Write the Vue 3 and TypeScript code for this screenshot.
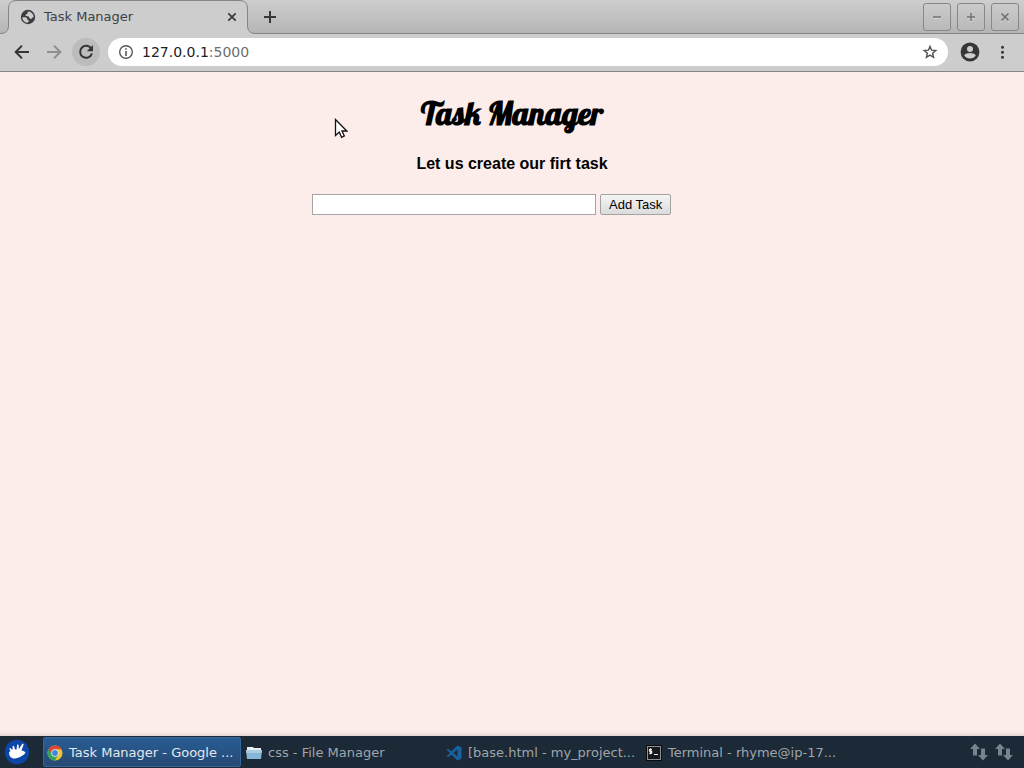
<script setup lang="ts">
import { ref } from 'vue'

const address = ref('127.0.0.1:5000')
const task = ref('')
</script>

<template>
  <div class="desktop">
    <header class="browser">
      <div class="tabstrip">
        <div class="tab">
          <svg class="tab-shape" width="256" height="34" viewBox="0 0 256 34" aria-hidden="true">
            <path d="M0 34V33.5C6 33.5 8.500 31 8.500 25V9C8.500 3 11 .5 17 .5H239C245 .5 247.500 3 247.500 9V25C247.500 31 250 33.500 256 33.500V34Z" fill="#cdcdcd" />
            <path d="M0 33.500C6 33.500 8.500 31 8.500 25V9C8.500 3 11 .5 17 .5H239C245 .5 247.500 3 247.500 9V25C247.500 31 250 33.500 256 33.500" fill="none" stroke="#858585" />
          </svg>
          <svg class="favicon" width="16" height="16" viewBox="0 0 16 16" aria-hidden="true">
            <circle cx="8" cy="8" r="7.200" fill="#3b3d3f" />
            <path d="M8.500 2.400C7.300 2.400 7.200 3.500 7.800 4.200 7.400 5.200 5.400 5 5.500 6.300 5.600 7.600 7.300 7.200 8.400 7.400 9.600 7.700 9 9.200 10 9.800 11.300 10.300 12.300 9.500 12.300 8.500L13.700 8.300C13.700 5.400 11.600 2.800 8.500 2.400ZM2.300 8.300H5.200C6.800 8.400 7.500 9.400 7.200 10.800 8.600 10.700 9.200 11.500 8.600 12.500L7.600 13.800C4.600 13.600 2.300 11.300 2.300 8.300Z" fill="#cdcdcd" />
          </svg>
          <span class="tab-title">Task Manager</span>
          <button class="tab-close" aria-label="Close tab">
            <svg width="10" height="10" viewBox="0 0 10 10"><path d="M1.300 1.300L8.700 8.700M8.700 1.300L1.300 8.700" stroke="#3c3e40" stroke-width="1.800" /></svg>
          </button>
        </div>
        <button class="new-tab" aria-label="New tab">
          <svg width="14" height="14" viewBox="0 0 14 14"><path d="M7 1V13M1 7H13" stroke="#36383a" stroke-width="2" /></svg>
        </button>
        <div class="window-buttons">
          <button aria-label="Minimize"><svg width="12" height="12" viewBox="0 0 12 12"><path d="M2 7H10" stroke="#e2e2e2" /><path d="M2 6H10" stroke="#707070" stroke-width="1.500" /></svg></button>
          <button aria-label="Maximize"><svg width="12" height="12" viewBox="0 0 12 12"><path d="M2 7H10M6 3V11" stroke="#e2e2e2" /><path d="M2 6H10M6 2V10" stroke="#707070" stroke-width="1.500" /></svg></button>
          <button aria-label="Close"><svg width="12" height="12" viewBox="0 0 12 12"><path d="M2 3L10 11M10 3L2 11" stroke="#e2e2e2" /><path d="M2.500 2.500L9.500 9.500M9.500 2.500L2.500 9.500" stroke="#707070" stroke-width="1.700" /></svg></button>
        </div>
      </div>

      <div class="toolbar">
        <button class="tool" aria-label="Back">
          <svg width="16" height="16" viewBox="0 0 16 16"><path d="M15 8H2M8 1.600L1.700 8 8 14.400" fill="none" stroke="#333537" stroke-width="2" /></svg>
        </button>
        <button class="tool" aria-label="Forward">
          <svg width="16" height="16" viewBox="0 0 16 16"><path d="M1 8H14M8 1.600L14.300 8 8 14.400" fill="none" stroke="#8e8e8e" stroke-width="2" /></svg>
        </button>
        <button class="tool hovered" aria-label="Reload">
          <svg width="16" height="16" viewBox="0 0 16 16"><path d="M13.300 4.700A6 6 0 1 0 13.900 9.500" fill="none" stroke="#333537" stroke-width="2" /><path d="M15 1V7.200H8.800Z" fill="#333537" /></svg>
        </button>
        <div class="omnibox">
          <svg width="16" height="16" viewBox="0 0 16 16" aria-hidden="true"><circle cx="8" cy="8" r="6.300" fill="none" stroke="#55585b" stroke-width="1.400" /><path d="M8 7V12M8 4.200V5.800" stroke="#55585b" stroke-width="1.600" /></svg>
          <label class="address">
            <span class="address-text" aria-hidden="true">127.0.0.1<span class="port">:5000</span></span>
            <input v-model="address" type="text" aria-label="Address" />
          </label>
          <button class="star" aria-label="Bookmark this page">
            <svg width="16" height="16" viewBox="0 0 16 16"><path d="M8 2.400L9.600 6.200 13.800 6.500 10.600 9.200 11.600 13.300 8 11.100 4.400 13.300 5.400 9.200 2.200 6.500 6.400 6.200Z" fill="none" stroke="#505356" stroke-width="1.400" /></svg>
          </button>
        </div>
        <button class="profile" aria-label="Profile">
          <svg width="20" height="20" viewBox="0 0 20 20"><circle cx="10" cy="10" r="9.400" fill="#343638" /><circle cx="10" cy="7" r="3" fill="#cdcdcd" /><path d="M4.200 13.500C5 11.700 8 11 10 11S15 11.700 15.800 13.500C14.500 15.500 12.500 16.500 10 16.500S5.500 15.500 4.200 13.500Z" fill="#cdcdcd" /></svg>
        </button>
        <button class="more" aria-label="Menu">
          <svg width="4" height="16" viewBox="0 0 4 16"><g fill="#343638"><circle cx="2.500" cy="3.300" r="1.500" /><circle cx="2.500" cy="8.300" r="1.500" /><circle cx="2.500" cy="13.300" r="1.500" /></g></svg>
        </button>
      </div>
    </header>

    <main class="page">
      <h1>Task Manager</h1>
      <h2>Let us create our firt task</h2>
      <form class="task-form" @submit.prevent>
        <input v-model="task" type="text" aria-label="Task" />
        <button type="submit">Add Task</button>
      </form>
      <svg class="pointer" width="14" height="21" viewBox="0 0 14 21" aria-hidden="true">
        <path d="M1.500 1.500V17.500L5.300 14 7.600 19.300 10.300 18 8 13H12.800Z" fill="#fff" stroke="#151010" stroke-width="1.300" />
      </svg>
    </main>

    <footer class="taskbar">
      <button class="start" aria-label="Applications">
        <svg width="26" height="26" viewBox="0 0 26 26"><circle cx="13" cy="13" r="12.200" fill="#0b46a8" /><path d="M5 13.500L6.500 12 5.200 9.700 6.200 9 8.500 11 8.700 7 10 6.800 11 10.500 12.500 10.500 13.200 5.500 14.600 5.700 14.800 10.200 18.500 4.500 19.700 5.200 17.500 11.500C20.500 12 22 13 21 14.500 19.300 16.400 15 19 11 19.500 7 19.800 5 17 5 13.500Z" fill="#fff" /></svg>
      </button>
      <nav class="windows" aria-label="Open windows">
        <button class="window active">
          <svg width="16" height="16" viewBox="0 0 16 16"><circle cx="8" cy="8" r="7.500" fill="#f3c32e" /><path d="M8 8L1.500 4.250A7.500 7.500 0 0 1 14.500 4.250H8Z" fill="#dc4638" /><path d="M1.500 4.250A7.500 7.500 0 0 0 8 15.500L11.200 9.900 8 8Z" fill="#35a457" /><path d="M1.500 4.250L5 10 8 8 9 4.250 4 2Z" fill="#dc4638" /><path d="M1.500 4.250L4.700 9.900 8 11.800 5.500 15A7.500 7.500 0 0 1 1.500 4.250Z" fill="#35a457" /><circle cx="8" cy="8" r="3.700" fill="#eee" /><circle cx="8" cy="8" r="2.900" fill="#4285df" /></svg>
          <span>Task Manager - Google ...</span>
        </button>
        <button class="window">
          <svg width="16" height="16" viewBox="0 0 16 16"><path d="M1 2H7L8 3H15V13H1Z" fill="#e3edf3" /><path d="M0 5H16L15 14H1Z" fill="#86b5d5" /><path d="M0 5H16L15.700 8H.3Z" fill="#a9cce2" /></svg>
          <span>css - File Manager</span>
        </button>
        <button class="window">
          <svg width="16" height="16" viewBox="0 0 16 16"><path d="M11.500 .5L15.500 2.300V13.700L11.500 15.500 5.300 9.800 2 12.300 .5 11.500 4 8 .5 4.500 2 3.700 5.300 6.200ZM11.500 4.500L7.300 8 11.500 11.500Z" fill="#17629c" fill-rule="evenodd" /></svg>
          <span>[base.html - my_project...</span>
        </button>
        <button class="window">
          <svg width="16" height="16" viewBox="0 0 16 16"><rect x=".5" y=".5" width="15" height="15" fill="#17191a" stroke="#080a0b" /><rect x="1.500" y="1.500" width="13" height="13" fill="none" stroke="#8d9293" /><path d="M6 4.500H3.500V6.200H5.700V8.200H3M4.600 3.300V9.300M8 9.500H12" fill="none" stroke="#f1f1f1" stroke-width="1.100" /></svg>
          <span>Terminal - rhyme@ip-17...</span>
        </button>
      </nav>
      <div class="tray">
        <svg v-for="n in 2" :key="n" width="18" height="18" viewBox="0 0 18 18" aria-hidden="true"><path d="M5 .5L10 6H7V12.500H3V6H0ZM11 5.500H15V12H18L13 17.500 8 12H11Z" fill="#77838e" /></svg>
      </div>
    </footer>
  </div>
</template>

<style>
body {
  margin: 0;
}
</style>

<style scoped>
* {
  box-sizing: border-box;
}

button {
  cursor: default;
  font: inherit;
}

.desktop {
  min-height: 100vh;
  display: flex;
  flex-direction: column;
  font-family: "DejaVu Sans", sans-serif;
}

.browser {
  background: #cdcdcd;
  border-bottom: 1px solid #858585;
}

.browser button {
  display: flex;
  align-items: center;
  justify-content: center;
  flex: none;
  padding: 0;
  border: 0;
  background: none;
}

.browser svg {
  flex: none;
}

.tabstrip {
  height: 34px;
  display: flex;
  align-items: center;
  background: linear-gradient(#cecece, #b4b4b4);
  box-shadow: inset 0 -1px #858585;
}

.tab {
  position: relative;
  width: 256px;
  height: 34px;
  padding: 0 16px 0 20px;
  display: flex;
  align-items: center;
}

.tab-shape {
  position: absolute;
  inset: 0;
}

.favicon,
.tab-title,
.tab-close {
  position: relative;
}

.tab-title {
  flex: 1;
  margin-left: 8px;
  font-size: 13px;
  line-height: 16px;
  color: #3f4143;
}

.browser .tab-close {
  width: 16px;
  height: 16px;
}

.browser .new-tab {
  width: 28px;
  height: 28px;
}

.window-buttons {
  margin-left: auto;
  padding-right: 5px;
  display: flex;
  gap: 6px;
}

.browser .window-buttons button {
  width: 28px;
  height: 28px;
  border: 1px solid #888;
  border-radius: 3px;
  background: linear-gradient(#cbcbcb, #b9b9b9);
}

.toolbar {
  height: 37px;
  padding: 0 15px 1px 8px;
  display: flex;
  align-items: center;
}

.browser .tool {
  width: 28px;
  height: 28px;
  margin-right: 4px;
  border-radius: 50%;
}

.browser .tool.hovered {
  margin-right: 8px;
  background: #bcbcbc;
}

.omnibox {
  flex: 1;
  height: 28px;
  padding: 0 10px;
  display: flex;
  align-items: center;
  gap: 8px;
  border-radius: 14px;
  background: #fff;
}

.address {
  flex: 1;
  display: grid;
  font-size: 14px;
  line-height: 20px;
  color: #202224;
}

.address > * {
  grid-area: 1 / 1;
}

.address input {
  min-width: 0;
  padding: 0;
  border: 0;
  outline: 0;
  background: none;
  font: inherit;
  color: transparent;
}

.port {
  color: #6b6e71;
}

.browser .profile {
  width: 20px;
  margin-left: 12px;
}

.browser .more {
  width: 14px;
  margin-left: 15px;
}

.page {
  position: relative;
  flex: 1;
  padding: 20px;
  background: #fcedea;
  box-shadow: inset 0 -5px 5px -4px #d8cac7;
  font-family: "Liberation Sans", Arial, sans-serif;
  text-align: center;
  color: #000;
}

h1 {
  margin: 0 0 20px;
  font: 700 32px/42px Lobster, "Liberation Serif", serif;
}

h2 {
  margin: 0 0 21px;
  font-size: 16px;
  line-height: 19px;
}

.task-form {
  max-width: 400px;
  margin: 0 auto;
  display: flex;
  gap: 4px;
}

.task-form input {
  width: 71%;
  height: 21px;
  padding: 1px 2px;
  border: 1px solid #a5a5a5;
  background: #fff;
  font: 13px/15px "Liberation Sans", Arial, sans-serif;
}

.task-form button {
  height: 21px;
  padding: 0 8px;
  border: 1px solid #a3a3a3;
  border-radius: 2px;
  background: linear-gradient(#f5f5f5, #dcdcdc);
  font-size: 13px;
  line-height: 19px;
  color: #000;
}

.pointer {
  position: absolute;
  left: 334px;
  top: 46px;
}

.taskbar {
  height: 32px;
  padding: 0 11px 0 4px;
  display: flex;
  align-items: center;
  background: #1c2936;
}

.start {
  height: 26px;
  margin-right: 12px;
  padding: 0;
  border: 0;
  background: none;
}

.start svg {
  display: block;
}

.windows {
  flex: 1;
  min-width: 0;
  display: flex;
}

.window {
  flex: 0 1 200px;
  min-width: 0;
  height: 30px;
  padding: 1px 3px 0;
  display: flex;
  align-items: center;
  gap: 6px;
  border: 1px solid transparent;
  background: none;
  font-size: 13px;
  line-height: 18px;
  color: #9fa6ac;
  white-space: nowrap;
}

.window svg {
  flex: none;
}

.window.active {
  flex-basis: 198px;
  margin: 0 1px;
  border-color: #34669b;
  border-radius: 2px;
  background: linear-gradient(#285c94, #264a73);
  color: #e2e8ee;
}

.tray {
  display: flex;
  gap: 7px;
}
</style>
